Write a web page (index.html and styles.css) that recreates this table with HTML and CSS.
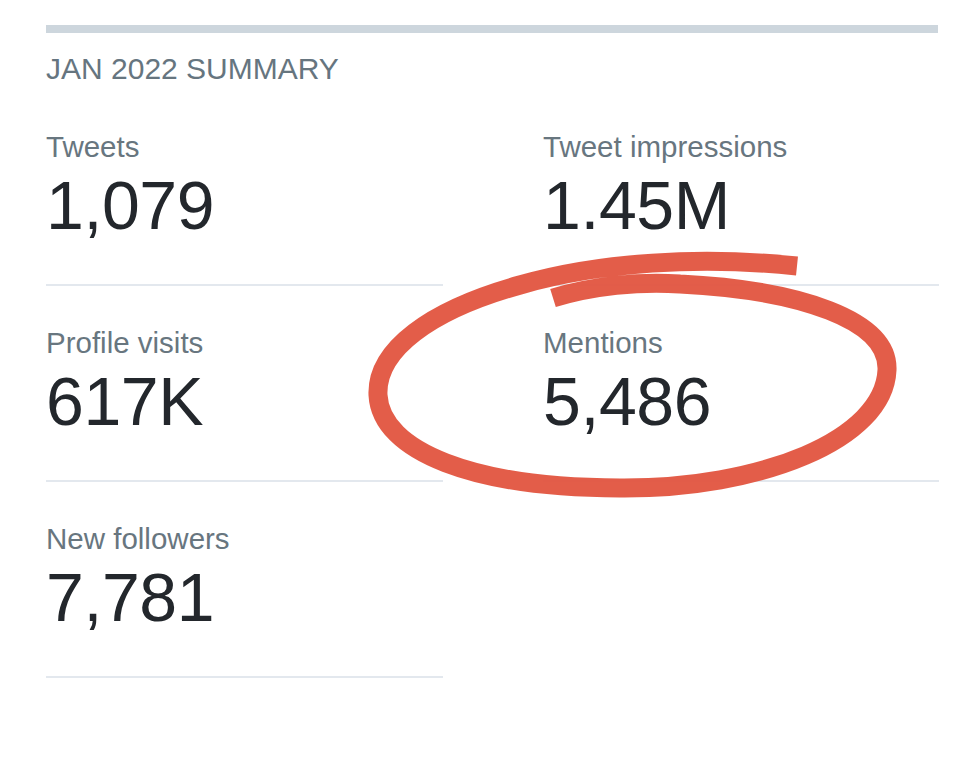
FILE: index.html
```html
<!DOCTYPE html>
<html lang="en">
<head>
<meta charset="utf-8">
<title>Jan 2022 Summary</title>
<link rel="stylesheet" href="styles.css">
</head>
<body>
<main class="page">
  <div class="topbar"></div>
  <h2 class="summary-title">JAN 2022 SUMMARY</h2>
  <section class="stats">
    <div class="stat">
      <div class="stat-label">Tweets</div>
      <div class="stat-value">1,079</div>
    </div>
    <div class="stat">
      <div class="stat-label">Tweet impressions</div>
      <div class="stat-value">1.45M</div>
    </div>
    <div class="stat">
      <div class="stat-label">Profile visits</div>
      <div class="stat-value">617K</div>
    </div>
    <div class="stat">
      <div class="stat-label">Mentions</div>
      <div class="stat-value">5,486</div>
    </div>
    <div class="stat">
      <div class="stat-label">New followers</div>
      <div class="stat-value">7,781</div>
    </div>
  </section>
  <svg class="scribble" width="975" height="762" viewBox="0 0 975 762" aria-hidden="true">
    <path class="ink" d="M 797 266 C 700 256, 600 262, 520 285 C 430 310, 376 350, 378 395 C 381 452, 475 488, 620 488 C 760 489, 884 440, 887 370 C 889 320, 800 290, 680 284 C 640 281, 592 286, 553 298"/>
  </svg>
</main>
</body>
</html>
```

FILE: styles.css
```css
html, body {
  margin: 0;
  padding: 0;
  background: #ffffff;
}

.page {
  position: relative;
  width: 975px;
  height: 762px;
  padding: 25px 0 0 46px;
  box-sizing: border-box;
  font-family: "Liberation Sans", Arial, Helvetica, sans-serif;
  overflow: hidden;
}

.topbar {
  width: 892px;
  height: 8px;
  background: #cdd6dd;
}

.summary-title {
  margin: 19px 0 4px 0;
  font-size: 30px;
  line-height: 34px;
  font-weight: 400;
  color: #66757f;
}

.stats {
  display: grid;
  grid-template-columns: 397px 396px;
  column-gap: 100px;
}

.stat {
  padding: 41px 0 45px 0;
  border-bottom: 2px solid #e3e8ee;
}

.stat-label {
  font-size: 29.5px;
  line-height: 32px;
  color: #68767f;
}

.stat-value {
  margin-top: 8px;
  font-size: 68px;
  line-height: 68px;
  color: #23272c;
  letter-spacing: -0.4px;
}

.scribble {
  position: absolute;
  left: 0;
  top: 0;
  pointer-events: none;
}

.ink {
  fill: none;
  stroke: #e1543f;
  stroke-width: 19;
  stroke-linecap: butt;
  stroke-linejoin: round;
  opacity: 0.95;
}
```
